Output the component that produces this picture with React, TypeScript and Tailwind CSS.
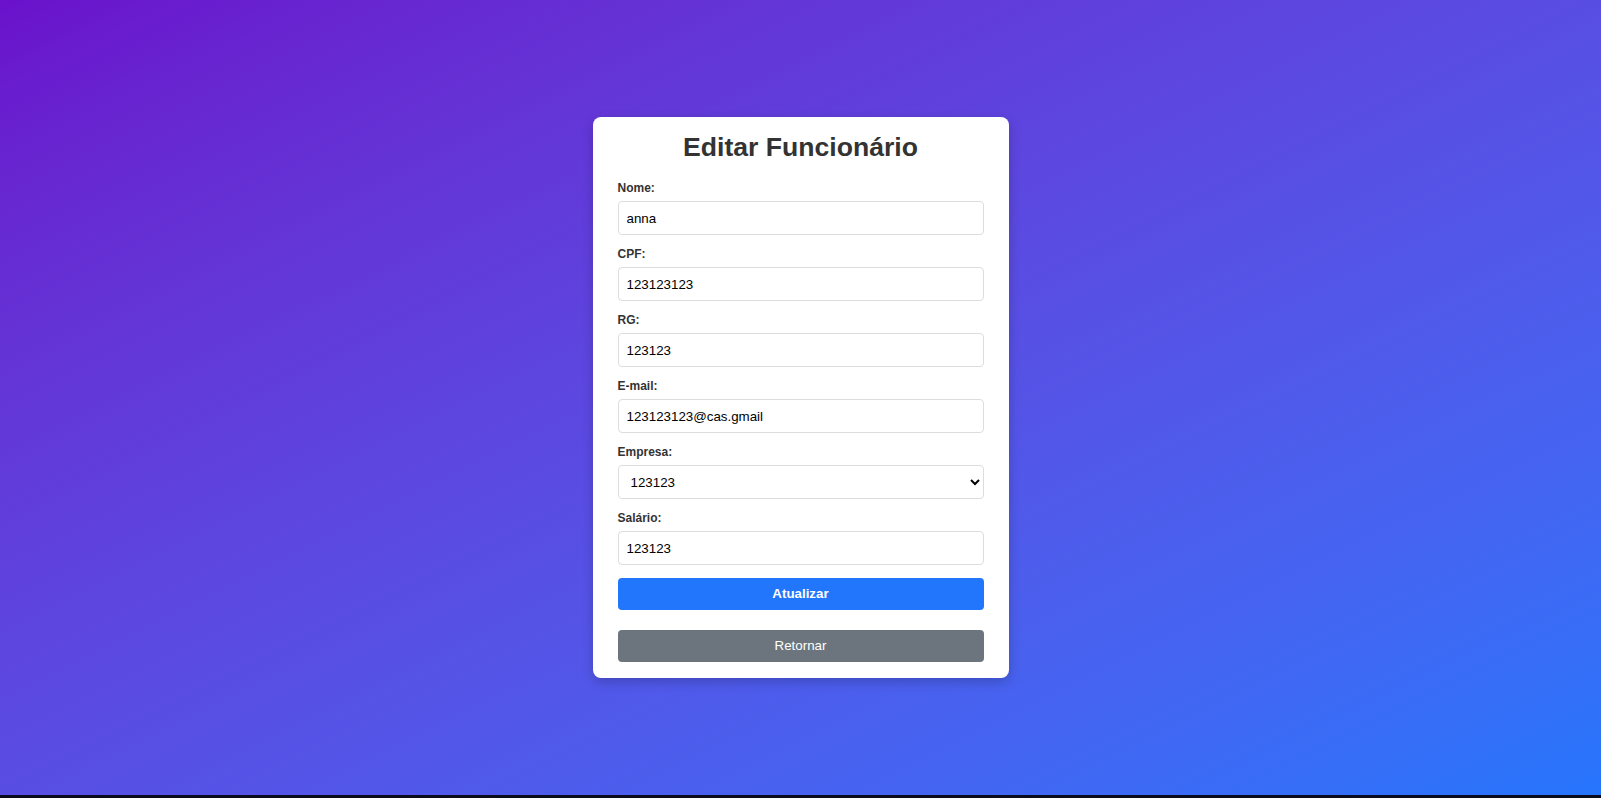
import { useState } from "react";

type Field = { label: string; name: string };

const fields: Field[] = [
  { label: "Nome:", name: "nome" },
  { label: "CPF:", name: "cpf" },
  { label: "RG:", name: "rg" },
  { label: "E-mail:", name: "email" },
];

export default function App() {
  const [form, setForm] = useState<Record<string, string>>({
    nome: "anna",
    cpf: "123123123",
    rg: "123123",
    email: "123123123@cas.gmail",
    empresa: "123123",
    salario: "123123",
  });

  const update = (name: string, value: string) =>
    setForm((f) => ({ ...f, [name]: value }));

  const labelClass =
    "block text-[12px] leading-[14px] font-bold text-[#333333] mb-[6px]";
  const inputClass =
    "block w-full h-[34px] rounded-[4px] border border-[#dddddd] bg-white px-[8px] text-[13.33px] text-black outline-none";

  return (
    <div className="flex flex-col font-['Liberation_Sans',Arial,sans-serif]">
      <div className="h-[795px] bg-linear-to-br from-[#6a11cb] to-[#2575fc] flex items-center justify-center">
        <form
          onSubmit={(e) => e.preventDefault()}
          className="w-[416px] bg-white rounded-[8px] shadow-[0_4px_12px_rgba(0,0,0,0.2)] px-[25px] pt-[15px] pb-4"
        >
          <h1 className="text-center text-[26.6px] leading-[31px] font-bold text-[#333333] mb-[18px]">
            Editar Funcionário
          </h1>

          {fields.map((f) => (
            <div key={f.name} className="mb-[12px]">
              <label className={labelClass}>{f.label}</label>
              <input
                className={inputClass}
                value={form[f.name]}
                onChange={(e) => update(f.name, e.target.value)}
              />
            </div>
          ))}

          <div className="mb-[12px]">
            <label className={labelClass}>Empresa:</label>
            <select
              className={inputClass}
              value={form.empresa}
              onChange={(e) => update("empresa", e.target.value)}
            >
              <option value="123123">123123</option>
            </select>
          </div>

          <div className="mb-[13px]">
            <label className={labelClass}>Salário:</label>
            <input
              className={inputClass}
              value={form.salario}
              onChange={(e) => update("salario", e.target.value)}
            />
          </div>

          <button
            type="submit"
            className="block w-full h-[32px] rounded-[4px] bg-[#2176fc] text-white text-[13.33px] font-bold"
          >
            Atualizar
          </button>

          <button
            type="button"
            className="block w-full h-[32px] mt-5 rounded-[4px] bg-[#6c757d] text-white text-[13.33px]"
          >
            Retornar
          </button>
        </form>
      </div>
      <div className="h-[3px] bg-[#0b0b1e]" />
    </div>
  );
}
